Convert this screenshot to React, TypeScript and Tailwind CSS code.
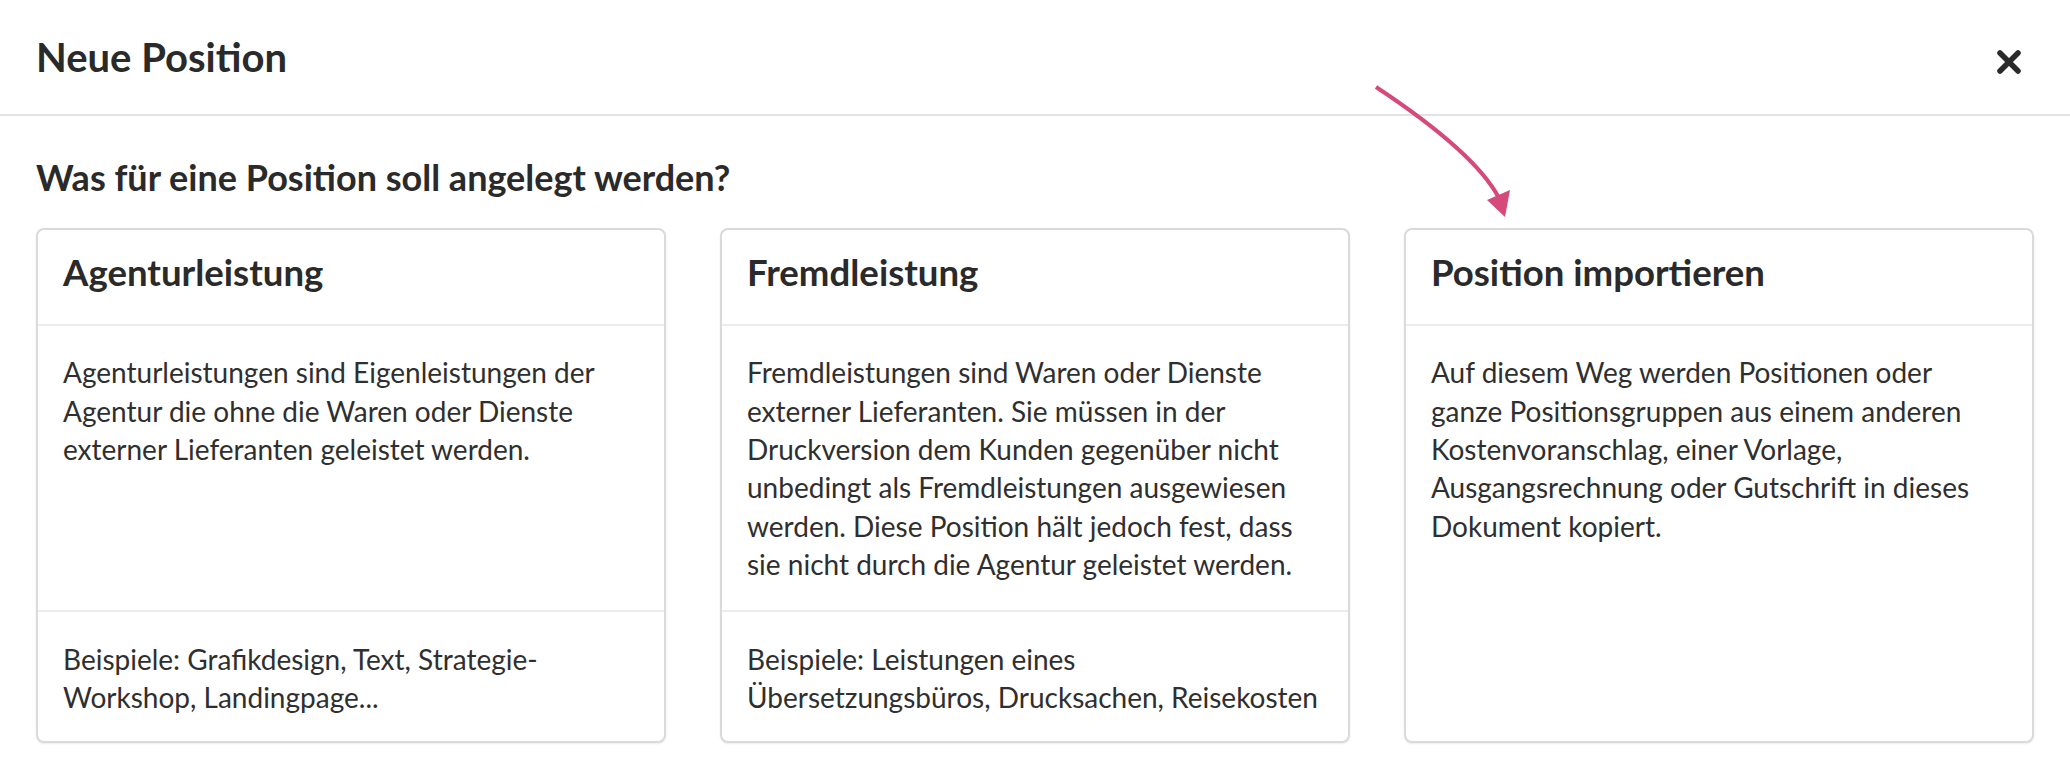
import React from "react";

type Option = {
  title: string;
  text: string;
  example?: string;
};

const options: Option[] = [
  {
    title: "Agenturleistung",
    text: "Agenturleistungen sind Eigenleistungen der Agentur die ohne die Waren oder Dienste externer Lieferanten geleistet werden.",
    example: "Beispiele: Grafikdesign, Text, Strategie-Workshop, Landingpage...",
  },
  {
    title: "Fremdleistung",
    text: "Fremdleistungen sind Waren oder Dienste externer Lieferanten. Sie müssen in der Druckversion dem Kunden gegenüber nicht unbedingt als Fremdleistungen ausgewiesen werden. Diese Position hält jedoch fest, dass sie nicht durch die Agentur geleistet werden.",
    example: "Beispiele: Leistungen eines Übersetzungsbüros, Drucksachen, Reisekosten",
  },
  {
    title: "Position importieren",
    text: "Auf diesem Weg werden Positionen oder ganze Positionsgruppen aus einem anderen Kostenvoranschlag, einer Vorlage, Ausgangsrechnung oder Gutschrift in dieses Dokument kopiert.",
  },
];

function OptionCard({ option }: { option: Option }) {
  return (
    <div className="flex flex-col rounded-lg border-2 border-[#dadada] bg-white shadow-[0_1px_2px_rgba(0,0,0,0.08)] cursor-pointer">
      <div className="px-[25px] pt-5 pb-[30px] border-b-2 border-[#ececec]">
        <h3 className="text-[36.6px] leading-[44px] font-bold text-[#2a2a2a]">
          {option.title}
        </h3>
      </div>
      <p className="flex-1 px-[25px] pt-[27px] pb-[26px] text-[28px] leading-[38.4px] text-[#2f2f2f]">
        {option.text}
      </p>
      {option.example && (
        <p className="px-[25px] pt-[28px] pb-[25px] border-t-2 border-[#ececec] text-[28px] leading-[38.4px] text-[#2f2f2f]">
          {option.example}
        </p>
      )}
    </div>
  );
}

export default function App() {
  return (
    <div
      className="relative w-[2070px] h-[766px] overflow-hidden bg-white text-[#2a2a2a]"
      style={{ fontFamily: "Lato, 'Open Sans', sans-serif" }}
    >
      <header className="h-[116px] px-9 flex items-center justify-between border-b-2 border-[#e2e2e2]">
        <h1 className="text-[40px] font-bold leading-[1.2]">Neue Position</h1>
        <button className="w-[26px] h-[26px] mr-3 mt-[10px] text-[#2a2a2a]">
          <svg viewBox="0 0 26 26" width="26" height="26">
            <path
              d="M4 4 L22 22 M22 4 L4 22"
              stroke="currentColor"
              strokeWidth="5.5"
              strokeLinecap="round"
            />
          </svg>
        </button>
      </header>

      <main className="px-9 pt-10">
        <h2 className="text-[36px] font-bold leading-[1.2] mb-[29px]">
          Was für eine Position soll angelegt werden?
        </h2>
        <div className="grid grid-cols-3 gap-[54px]">
          {options.map((o) => (
            <OptionCard key={o.title} option={o} />
          ))}
        </div>
      </main>

      {/* hint arrow pointing at the import card */}
      <svg
        className="absolute left-0 top-0 pointer-events-none"
        width="2070"
        height="766"
      >
        <path
          d="M1376 87 C1432 124 1480 162 1499 198"
          fill="none"
          stroke="#d6497b"
          strokeWidth="4"
        />
        <polygon points="1487,200 1510,190 1505,217" fill="#d6497b" />
      </svg>
    </div>
  );
}
